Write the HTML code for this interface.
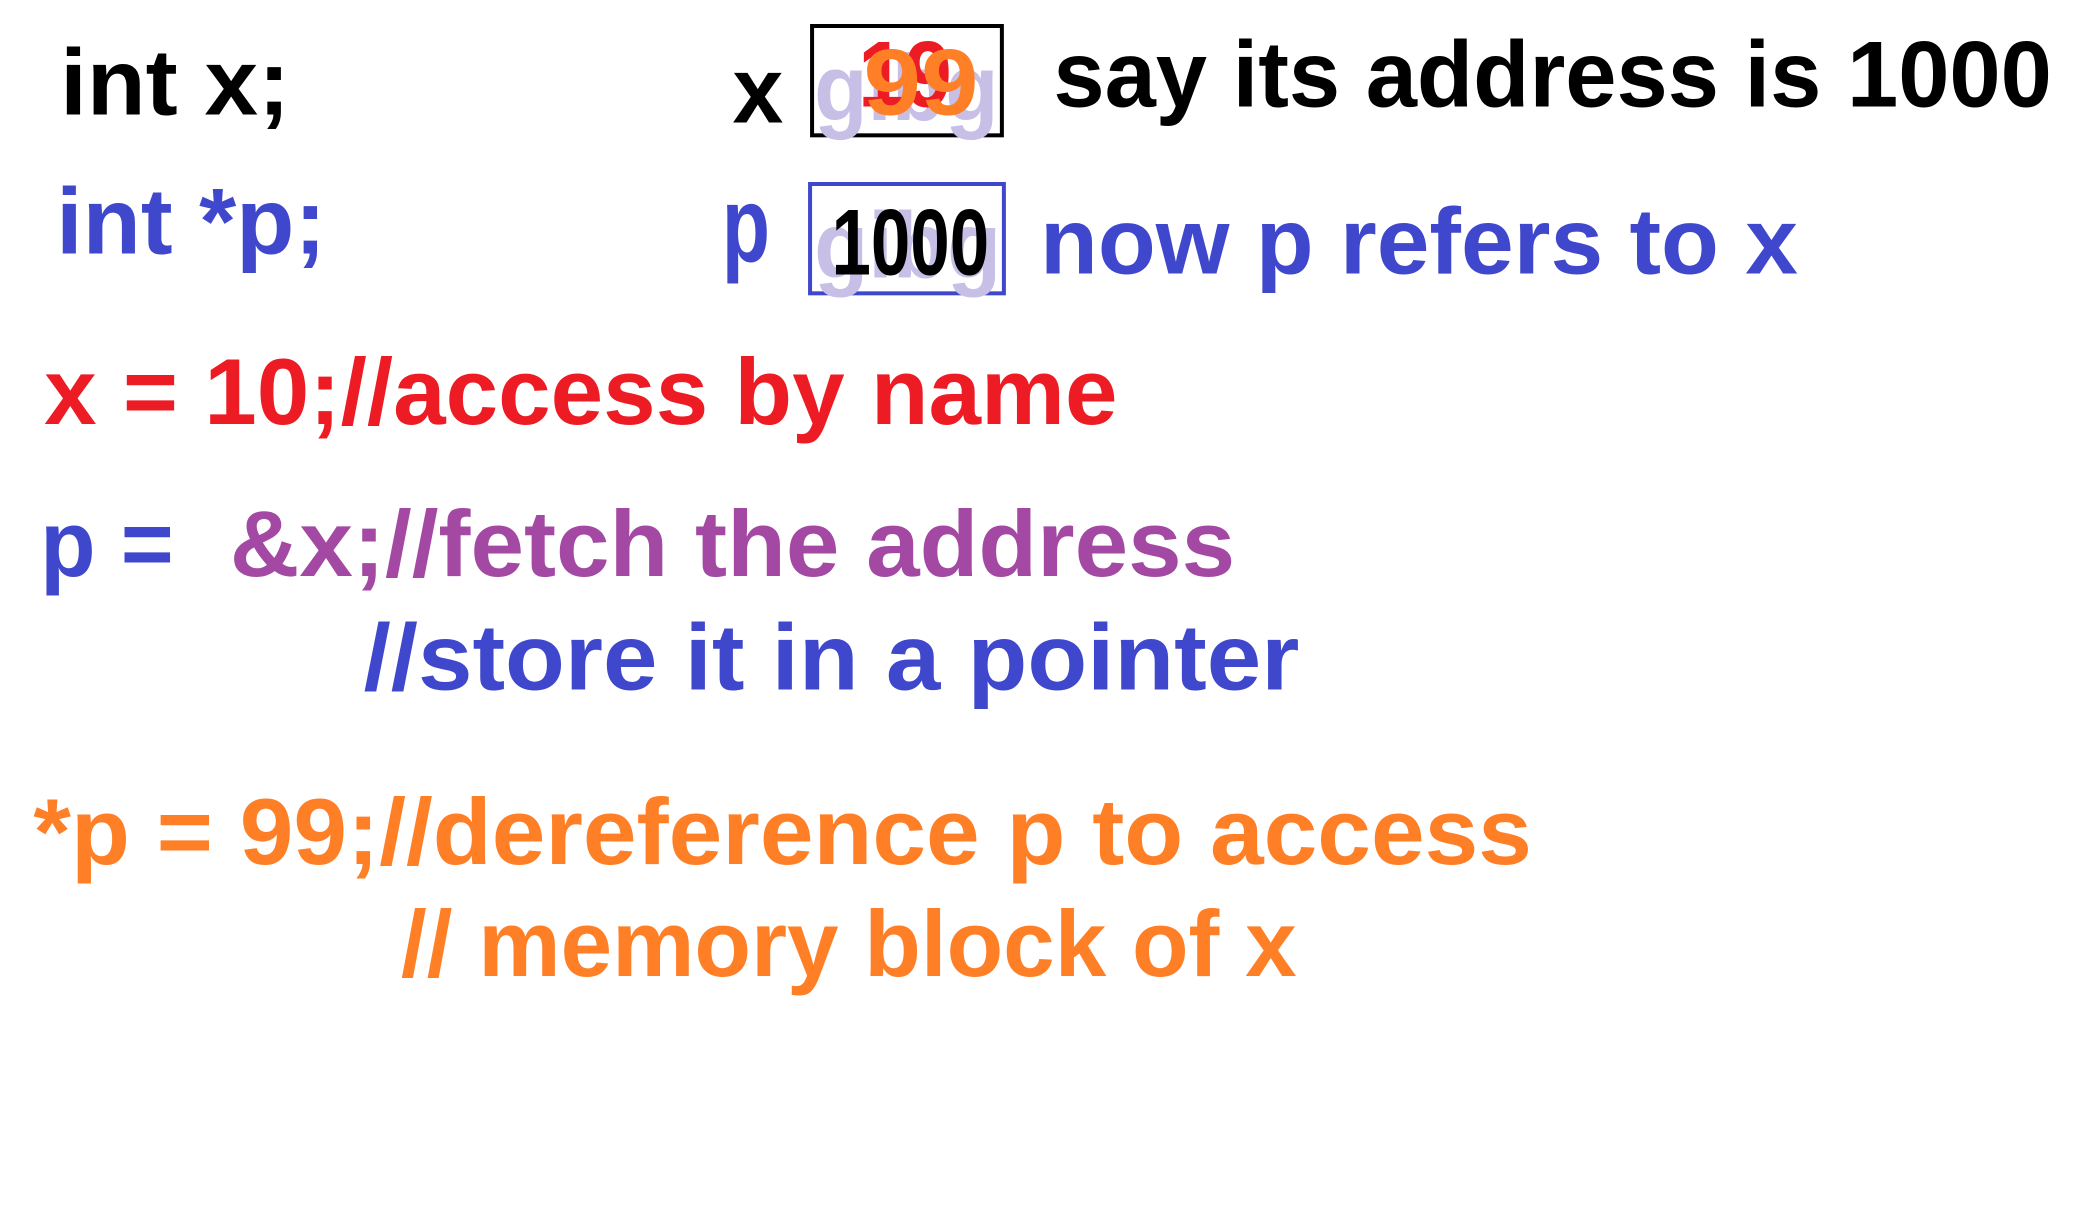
<!DOCTYPE html>
<html><head><meta charset="utf-8"><style>html,body{margin:0;padding:0;background:#fff;overflow:hidden}svg{display:block}</style></head>
<body>
<svg width="2096" height="1224" viewBox="0 0 1568 918" preserveAspectRatio="none" xmlns="http://www.w3.org/2000/svg" font-family="Liberation Sans, sans-serif" font-weight="bold" font-size="70">
<rect width="1568" height="918" fill="#fff"/>
<text x="45" y="86" fill="#000" textLength="172" lengthAdjust="spacingAndGlyphs">int x;</text>
<text x="548" y="92" fill="#000" textLength="38" lengthAdjust="spacingAndGlyphs">x</text>
<rect x="607.5" y="19.5" width="142" height="82" fill="#fff" stroke="#000" stroke-width="3"/>
<text x="609" y="90" fill="#c8bfe7" textLength="138" lengthAdjust="spacingAndGlyphs">gibg</text>
<text x="642" y="80" fill="#ed1c24" textLength="70" lengthAdjust="spacingAndGlyphs">19</text>
<text x="646" y="86" fill="#ff7f27" textLength="86" lengthAdjust="spacingAndGlyphs">99</text>
<text x="788" y="80" fill="#000" textLength="747" lengthAdjust="spacingAndGlyphs">say its address is 1000</text>
<text x="42" y="190" fill="#3f48cc" textLength="202" lengthAdjust="spacingAndGlyphs">int *p;</text>
<text x="540" y="196" fill="#3f48cc" textLength="36" lengthAdjust="spacingAndGlyphs" font-size="80">p</text>
<rect x="606" y="138" width="145" height="82" fill="#fff" stroke="#3f48cc" stroke-width="3"/>
<text x="609" y="208" fill="#c8bfe7" textLength="140" lengthAdjust="spacingAndGlyphs">gibg</text>
<text x="622" y="206" fill="#000" textLength="118" lengthAdjust="spacingAndGlyphs">1000</text>
<text x="778" y="205" fill="#3f48cc" textLength="567" lengthAdjust="spacingAndGlyphs">now p refers to x</text>
<text x="33" y="318" fill="#ed1c24" textLength="803" lengthAdjust="spacingAndGlyphs">x = 10;//access by name</text>
<text x="30" y="432" fill="#3f48cc" textLength="100" lengthAdjust="spacingAndGlyphs">p =</text>
<text x="172" y="432" fill="#a349a4" textLength="752" lengthAdjust="spacingAndGlyphs">&amp;x;//fetch the address</text>
<text x="272" y="517" fill="#3f48cc" textLength="700" lengthAdjust="spacingAndGlyphs">//store it in a pointer</text>
<text x="25" y="648" fill="#ff7f27" textLength="1121" lengthAdjust="spacingAndGlyphs">*p = 99;//dereference p to access</text>
<text x="300" y="732" fill="#ff7f27" textLength="670" lengthAdjust="spacingAndGlyphs">// memory block of x</text>
</svg>
</body></html>
